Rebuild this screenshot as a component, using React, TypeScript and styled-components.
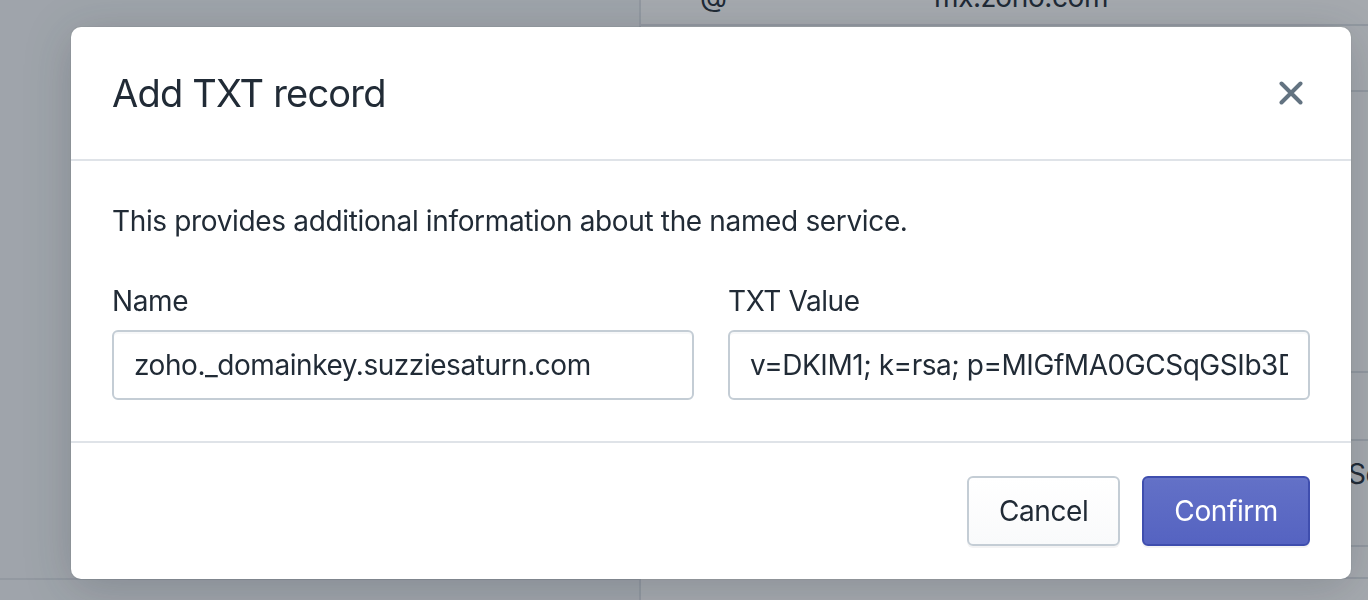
import React from 'react'
import styled, { createGlobalStyle } from 'styled-components'

const GlobalStyle = createGlobalStyle`
  html, body {
    margin: 0;
    padding: 0;
    height: 100%;
    overflow: hidden;
    background: #f4f6f8;
  }
  body {
    font-family: 'Inter', 'Liberation Sans', sans-serif;
    color: #212b36;
    -webkit-font-smoothing: antialiased;
  }
`

// page behind the modal
const Page = styled.div`
  display: flex;
  height: 640px;
  margin-top: -40px;
`

const SidePane = styled.div`
  width: 639px;
  height: 618px;
  border-bottom: 2px solid #dfe3e8;
  background: #f4f6f8;
`

const RecordsPane = styled.div`
  flex: 1;
  display: flex;
  flex-direction: column;
  background: #ffffff;
  border-left: 2px solid #dfe3e8;
`

const RecordRow = styled.div<{ $h: number; $padTop?: number }>`
  display: grid;
  grid-template-columns: 293px 414px 1fr;
  align-items: start;
  height: ${p => p.$h}px;
  padding-top: ${p => p.$padTop ?? 0}px;
  box-sizing: border-box;
  border-bottom: 2px solid #dfe3e8;
  font-size: 28px;
  line-height: 40px;
  letter-spacing: -0.4px;
  color: #212b36;
  white-space: nowrap;
`

const Cell = styled.div<{ $indent?: number }>`
  padding-left: ${p => p.$indent ?? 0}px;
  overflow: hidden;
`

// overlay + modal
const Backdrop = styled.div`
  position: fixed;
  inset: 0;
  background: rgba(33, 43, 54, 0.4);
  padding: 27px 17px 0 71px;
  display: flex;
  align-items: flex-start;
`

const Dialog = styled.div`
  width: 1280px;
  background: #ffffff;
  border-radius: 10px;
  box-shadow: 0 0 0 1px rgba(63, 63, 68, 0.05), 0 8px 48px rgba(33, 43, 54, 0.22);
  overflow: hidden;
`

const Header = styled.div`
  display: flex;
  align-items: center;
  justify-content: space-between;
  height: 134px;
  padding: 0 48px 0 41px;
  border-bottom: 2px solid #dfe3e8;
  box-sizing: border-box;
`

const Title = styled.h2`
  margin: 0;
  font-size: 38px;
  font-weight: 400;
  letter-spacing: -0.8px;
  line-height: 48px;
  color: #212b36;
`

const CloseButton = styled.button`
  display: flex;
  align-items: center;
  justify-content: center;
  width: 24px;
  height: 24px;
  padding: 0;
  border: 0;
  background: none;
  color: #637381;
  cursor: pointer;
`

const Body = styled.div`
  padding: 40px 41px 41px;
  border-bottom: 2px solid #dfe3e8;
`

const Text = styled.p`
  margin: 0 0 40px;
  font-size: 28px;
  line-height: 40px;
  letter-spacing: -0.35px;
`

const FormRow = styled.div`
  display: grid;
  grid-template-columns: minmax(0, 1fr) minmax(0, 1fr);
  gap: 34px;
`

const FormItem = styled.div`
  min-width: 0;
`

const Label = styled.div`
  font-size: 28px;
  line-height: 40px;
  letter-spacing: -0.4px;
  margin-bottom: 9px;
`

const Field = styled.div`
  height: 70px;
  box-sizing: border-box;
  border: 2px solid #c4cdd5;
  border-radius: 6px;
  padding: 0 20px;
  display: flex;
  align-items: center;
  background: #ffffff;
  box-shadow: inset 0 2px 0 0 rgba(99, 115, 129, 0.05);
`

const FieldText = styled.div`
  flex: 1;
  min-width: 0;
  overflow: hidden;
  white-space: nowrap;
  font-size: 28px;
  line-height: 40px;
  letter-spacing: -0.45px;
`

const Footer = styled.div`
  display: flex;
  justify-content: flex-end;
  gap: 22px;
  padding: 33px 41px 33px;
`

const Button = styled.button<{ $primary?: boolean }>`
  height: 70px;
  padding: 0 30px;
  border-radius: 6px;
  font-family: inherit;
  font-size: 28px;
  letter-spacing: -0.4px;
  border: 2px solid ${p => (p.$primary ? '#3f4eae' : '#c4cdd5')};
  background: ${p =>
    p.$primary
      ? 'linear-gradient(180deg, #6371c7, #5563c1)'
      : 'linear-gradient(180deg, #ffffff, #f9fafb)'};
  color: ${p => (p.$primary ? '#ffffff' : '#212b36')};
  box-shadow: ${p =>
    p.$primary
      ? 'inset 0 2px 0 0 #6774c8, 0 2px 0 0 rgba(22, 29, 37, 0.05)'
      : '0 2px 0 0 rgba(22, 29, 37, 0.05)'};
  cursor: pointer;
`

const CloseIcon = () => (
  <svg width="24" height="24" viewBox="0 0 24 24" fill="none">
    <path d="M2.5 2.5l19 19M21.5 2.5l-19 19" stroke="currentColor" strokeWidth="4" strokeLinecap="round" />
  </svg>
)

const App = () => {
  return (
    <>
      <GlobalStyle />
      <Page>
        <SidePane />
        <RecordsPane>
          <RecordRow $h={66} $padTop={17}>
            <Cell $indent={59}>@</Cell>
            <Cell>mx.zoho.com</Cell>
            <Cell />
          </RecordRow>
          <RecordRow $h={66} />
          <RecordRow $h={281} />
          <RecordRow $h={68} />
          <RecordRow $h={106} $padTop={13}>
            <Cell />
            <Cell />
            <Cell>Se</Cell>
          </RecordRow>
          <RecordRow $h={32} />
        </RecordsPane>
      </Page>

      <Backdrop>
        <Dialog>
          <Header>
            <Title>Add TXT record</Title>
            <CloseButton aria-label="Close">
              <CloseIcon />
            </CloseButton>
          </Header>
          <Body>
            <Text>This provides additional information about the named service.</Text>
            <FormRow>
              <FormItem>
                <Label>Name</Label>
                <Field>
                  <FieldText>zoho._domainkey.suzziesaturn.com</FieldText>
                </Field>
              </FormItem>
              <FormItem>
                <Label>TXT Value</Label>
                <Field>
                  <FieldText>v=DKIM1; k=rsa; p=MIGfMA0GCSqGSIb3DQEBAQUAA4GNADCBiQKBgQC</FieldText>
                </Field>
              </FormItem>
            </FormRow>
          </Body>
          <Footer>
            <Button>Cancel</Button>
            <Button $primary>Confirm</Button>
          </Footer>
        </Dialog>
      </Backdrop>
    </>
  )
}

export default App
